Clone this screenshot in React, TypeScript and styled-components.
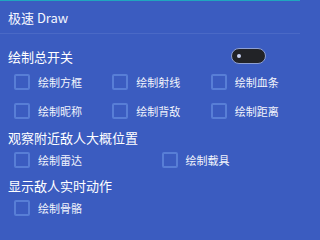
import React, { useState } from "react";
import styled, { createGlobalStyle } from "styled-components";

const GlobalStyle = createGlobalStyle`
  html, body {
    margin: 0;
    padding: 0;
    background: #3b5cc0;
  }
  body {
    font-family: "Noto Sans CJK SC", "Noto Sans", sans-serif;
    color: #ffffff;
  }
`;

interface Option {
  label: string;
  checked?: boolean;
}

interface Section {
  title: string;
  columns: number;
  rowHeight: number;
  gapTop: number;
  hasToggle?: boolean;
  options: Option[];
}

const sections: Section[] = [
  {
    title: "绘制总开关",
    columns: 3,
    rowHeight: 29,
    gapTop: 11,
    hasToggle: true,
    options: [
      { label: "绘制方框" },
      { label: "绘制射线" },
      { label: "绘制血条" },
      { label: "绘制昵称" },
      { label: "绘制背敌" },
      { label: "绘制距离" },
    ],
  },
  {
    title: "观察附近敌人大概位置",
    columns: 2,
    rowHeight: 24,
    gapTop: 1,
    options: [{ label: "绘制雷达" }, { label: "绘制载具" }],
  },
  {
    title: "显示敌人实时动作",
    columns: 2,
    rowHeight: 24,
    gapTop: 2,
    options: [{ label: "绘制骨骼" }],
  },
];

export default function App() {
  const [enabled, setEnabled] = useState<boolean>(false);

  return (
    <Panel>
      <GlobalStyle />
      <Header>极速 Draw</Header>
      {sections.map((section) => (
        <SectionBox key={section.title} $gapTop={section.gapTop}>
          <SectionTitle>
            <span>{section.title}</span>
            {section.hasToggle && (
              <Toggle $on={enabled} onClick={() => setEnabled((pre) => !pre)}>
                <ToggleDot $on={enabled} />
              </Toggle>
            )}
          </SectionTitle>
          <OptionGrid $columns={section.columns} $rowHeight={section.rowHeight}>
            {section.options.map((option) => (
              <OptionItem key={option.label}>
                <CheckBox />
                <OptionLabel>{option.label}</OptionLabel>
              </OptionItem>
            ))}
          </OptionGrid>
        </SectionBox>
      ))}
    </Panel>
  );
}

const Panel = styled.div`
  width: 300px;
  height: 219px;
  overflow: hidden;
  background: #3b5cc0;
`;
const Header = styled.div`
  height: 32px;
  border-top: 1px solid #1fa6bf;
  border-bottom: 1px solid #4a69c6;
  box-sizing: content-box;
  display: flex;
  align-items: center;
  padding-left: 8px;
  font-size: 13px;
  color: #f4f6ff;
`;
const SectionBox = styled.div<{ $gapTop: number }>`
  margin-top: ${(p) => p.$gapTop}px;
`;
const SectionTitle = styled.div`
  height: 22px;
  display: flex;
  align-items: center;
  justify-content: space-between;
  padding: 0 34px 0 8px;
  font-size: 13px;
  color: #ffffff;
`;
const Toggle = styled.div<{ $on: boolean }>`
  width: 35px;
  height: 16px;
  box-sizing: border-box;
  border-radius: 8px;
  border: 1.5px solid #8e9fd2;
  background: ${(p) => (p.$on ? "#2f9be0" : "#222327")};
  display: flex;
  align-items: center;
  padding: 0 5px;
  cursor: pointer;
`;
const ToggleDot = styled.div<{ $on: boolean }>`
  width: 4px;
  height: 4px;
  border-radius: 50%;
  background: #c9d3f2;
  margin-left: ${(p) => (p.$on ? "auto" : "0")};
`;
const OptionGrid = styled.div<{ $columns: number; $rowHeight: number }>`
  display: grid;
  grid-template-columns: repeat(${(p) => p.$columns}, ${(p) => 295 / p.$columns}px);
  grid-auto-rows: ${(p) => p.$rowHeight}px;
  padding-left: 14px;
`;
const OptionItem = styled.label`
  display: flex;
  align-items: center;
  gap: 8px;
  cursor: pointer;
`;
const CheckBox = styled.span`
  width: 16px;
  height: 16px;
  box-sizing: border-box;
  border: 2px solid #587ed6;
  border-radius: 2px;
  flex-shrink: 0;
`;
const OptionLabel = styled.span`
  font-size: 11px;
  color: #f2f4fc;
`;
